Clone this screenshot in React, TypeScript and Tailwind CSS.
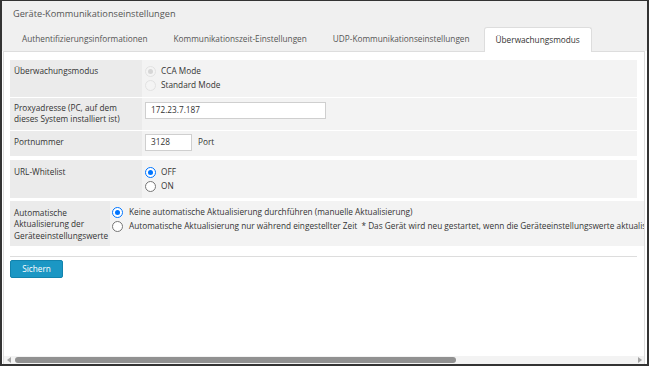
import React from "react";

type RadioProps = { checked?: boolean; disabled?: boolean };

function Radio({ checked, disabled }: RadioProps) {
  if (disabled) {
    return (
      <span className="flex h-[11px] w-[11px] shrink-0 items-center justify-center rounded-full border border-[#e2e2e2] bg-[#f4f4f4]">
        {checked ? <span className="h-[5px] w-[5px] rounded-full bg-[#d6d6d6]" /> : null}
      </span>
    );
  }
  if (checked) {
    return (
      <span className="flex h-[11px] w-[11px] shrink-0 items-center justify-center rounded-full border-[1.5px] border-[#0075ff] bg-white">
        <span className="h-[5px] w-[5px] rounded-full bg-[#0075ff]" />
      </span>
    );
  }
  return <span className="h-[11px] w-[11px] shrink-0 rounded-full border border-[#767676] bg-white" />;
}

function RadioLine({ label, checked, disabled, gap }: RadioProps & { label: string; gap: string }) {
  return (
    <div className={`flex h-[14px] items-center whitespace-nowrap ${gap}`}>
      <Radio checked={checked} disabled={disabled} />
      <span>{label}</span>
    </div>
  );
}

export default function App() {
  return (
    <div className="flex h-[366px] w-[649px] flex-col overflow-hidden border-x-2 border-t border-b-2 border-[#333333] bg-white font-['Open_Sans',sans-serif] text-[8.25px] text-[#333333]">
      {/* Header */}
      <div className="bg-[#f0f0f0] px-[11px] pt-[7px]">
        <div className="text-[9.2px] leading-[12px] text-[#555555]">Geräte-Kommunikationseinstellungen</div>
        <div className="relative z-10 mb-[-1px] ml-[-3px] mt-[7px] flex h-[25px] text-[#555555]">
          <div className="mr-[2px] flex items-center px-[12px]">Authentifizierungsinformationen</div>
          <div className="mr-[2px] flex items-center px-[12px]">Kommunikationszeit-Einstellungen</div>
          <div className="mr-[2px] flex items-center px-[12px]">UDP-Kommunikationseinstellungen</div>
          <div className="flex items-center rounded-t-[3px] border border-b-0 border-[#dddddd] bg-white px-[11px] text-[#333333]">
            Überwachungsmodus
          </div>
        </div>
      </div>

      {/* Panel */}
      <div className="ml-px mr-[2px] flex min-h-0 flex-1 flex-col border-x border-t border-[#dddddd]">
        <div className="min-h-0 flex-1 overflow-hidden pl-[6px] pr-[7px] pt-[8px]">
          {/* Row 1 */}
          <div className="flex h-[37px] w-[627px]">
            <div className="w-[132px] shrink-0 bg-[#ebebeb] pl-[4px] pt-[5px] leading-[11px]">Überwachungsmodus</div>
            <div className="flex-1 bg-[#f3f3f3] pl-[3px] pt-[4px]">
              <RadioLine label="CCA Mode" checked disabled gap="gap-[5px]" />
              <RadioLine label="Standard Mode" disabled gap="gap-[5px]" />
            </div>
          </div>
          {/* Row 2 */}
          <div className="mt-px flex h-[32px] w-[627px]">
            <div className="w-[132px] shrink-0 bg-[#ebebeb] pl-[4px] pt-[4px] leading-[11px]">
              Proxyadresse (PC, auf dem
              <br />
              dieses System installiert ist)
            </div>
            <div className="flex-1 bg-[#f3f3f3] pl-[3px] pt-[4px]">
              <div className="flex h-[17px] w-[181px] items-center border border-[#cfcfcf] bg-white pl-[5px]">172.23.7.187</div>
            </div>
          </div>
          {/* Row 3 */}
          <div className="mt-px flex h-[25px] w-[627px]">
            <div className="w-[132px] shrink-0 bg-[#ebebeb] pl-[4px] pt-[5px] leading-[11px]">Portnummer</div>
            <div className="flex flex-1 items-start bg-[#f3f3f3] pl-[3px] pt-[3px]">
              <div className="flex h-[17px] w-[47px] items-center border border-[#cfcfcf] bg-white pl-[5px]">3128</div>
              <div className="ml-[6px] flex h-[17px] items-center">Port</div>
            </div>
          </div>
          {/* Row 4 */}
          <div className="mt-[4px] flex h-[38px] w-[627px]">
            <div className="w-[132px] shrink-0 bg-[#ebebeb] pl-[4px] pt-[6px] leading-[11px]">URL-Whitelist</div>
            <div className="flex-1 bg-[#f3f3f3] pl-[3px] pt-[5px]">
              <RadioLine label="OFF" checked gap="gap-[5px]" />
              <RadioLine label="ON" gap="gap-[5px]" />
            </div>
          </div>
          {/* Row 5 */}
          <div className="mt-[3px] flex h-[45px] w-max min-w-[627px]">
            <div className="w-[100px] shrink-0 bg-[#ebebeb] pl-[4px] pt-[6px] leading-[11.3px]">
              Automatische
              <br />
              Aktualisierung der
              <br />
              Geräteeinstellungswerte
            </div>
            <div className="flex-1 bg-[#f3f3f3] pl-[2px] pr-[6px] pt-[4px]">
              <RadioLine label="Keine automatische Aktualisierung durchführen (manuelle Aktualisierung)" checked gap="gap-[6px] h-[14.7px]" />
              <RadioLine
                label={"Automatische Aktualisierung nur während eingestellter Zeit \u00a0* Das Gerät wird neu gestartet, wenn die Geräteeinstellungswerte aktualisiert werden."}
                gap="gap-[6px] h-[14.7px]"
              />
            </div>
          </div>
          {/* Separator */}
          <div className="mt-[10px] h-px w-[627px] bg-[#dddddd]" />
          {/* Button */}
          <div className="mt-[3px] flex h-[18px] w-[53px] items-center justify-center rounded-[2px] border border-[#1283ad] bg-[#1b97c4] text-white">
            Sichern
          </div>
        </div>

        {/* Horizontal scrollbar */}
        <div className="flex h-[8px] shrink-0 items-center bg-[#f3f3f3]">
          <div className="ml-[3px] h-0 w-0 border-y-[3px] border-r-[4px] border-y-transparent border-r-[#a3a3a3]" />
          <div className="ml-[4px] h-[6px] w-[441px] rounded-full bg-[#919191]" />
          <div className="flex-1" />
          <div className="mr-[2px] h-0 w-0 border-y-[3px] border-l-[4px] border-y-transparent border-l-[#a3a3a3]" />
        </div>
      </div>
    </div>
  );
}
